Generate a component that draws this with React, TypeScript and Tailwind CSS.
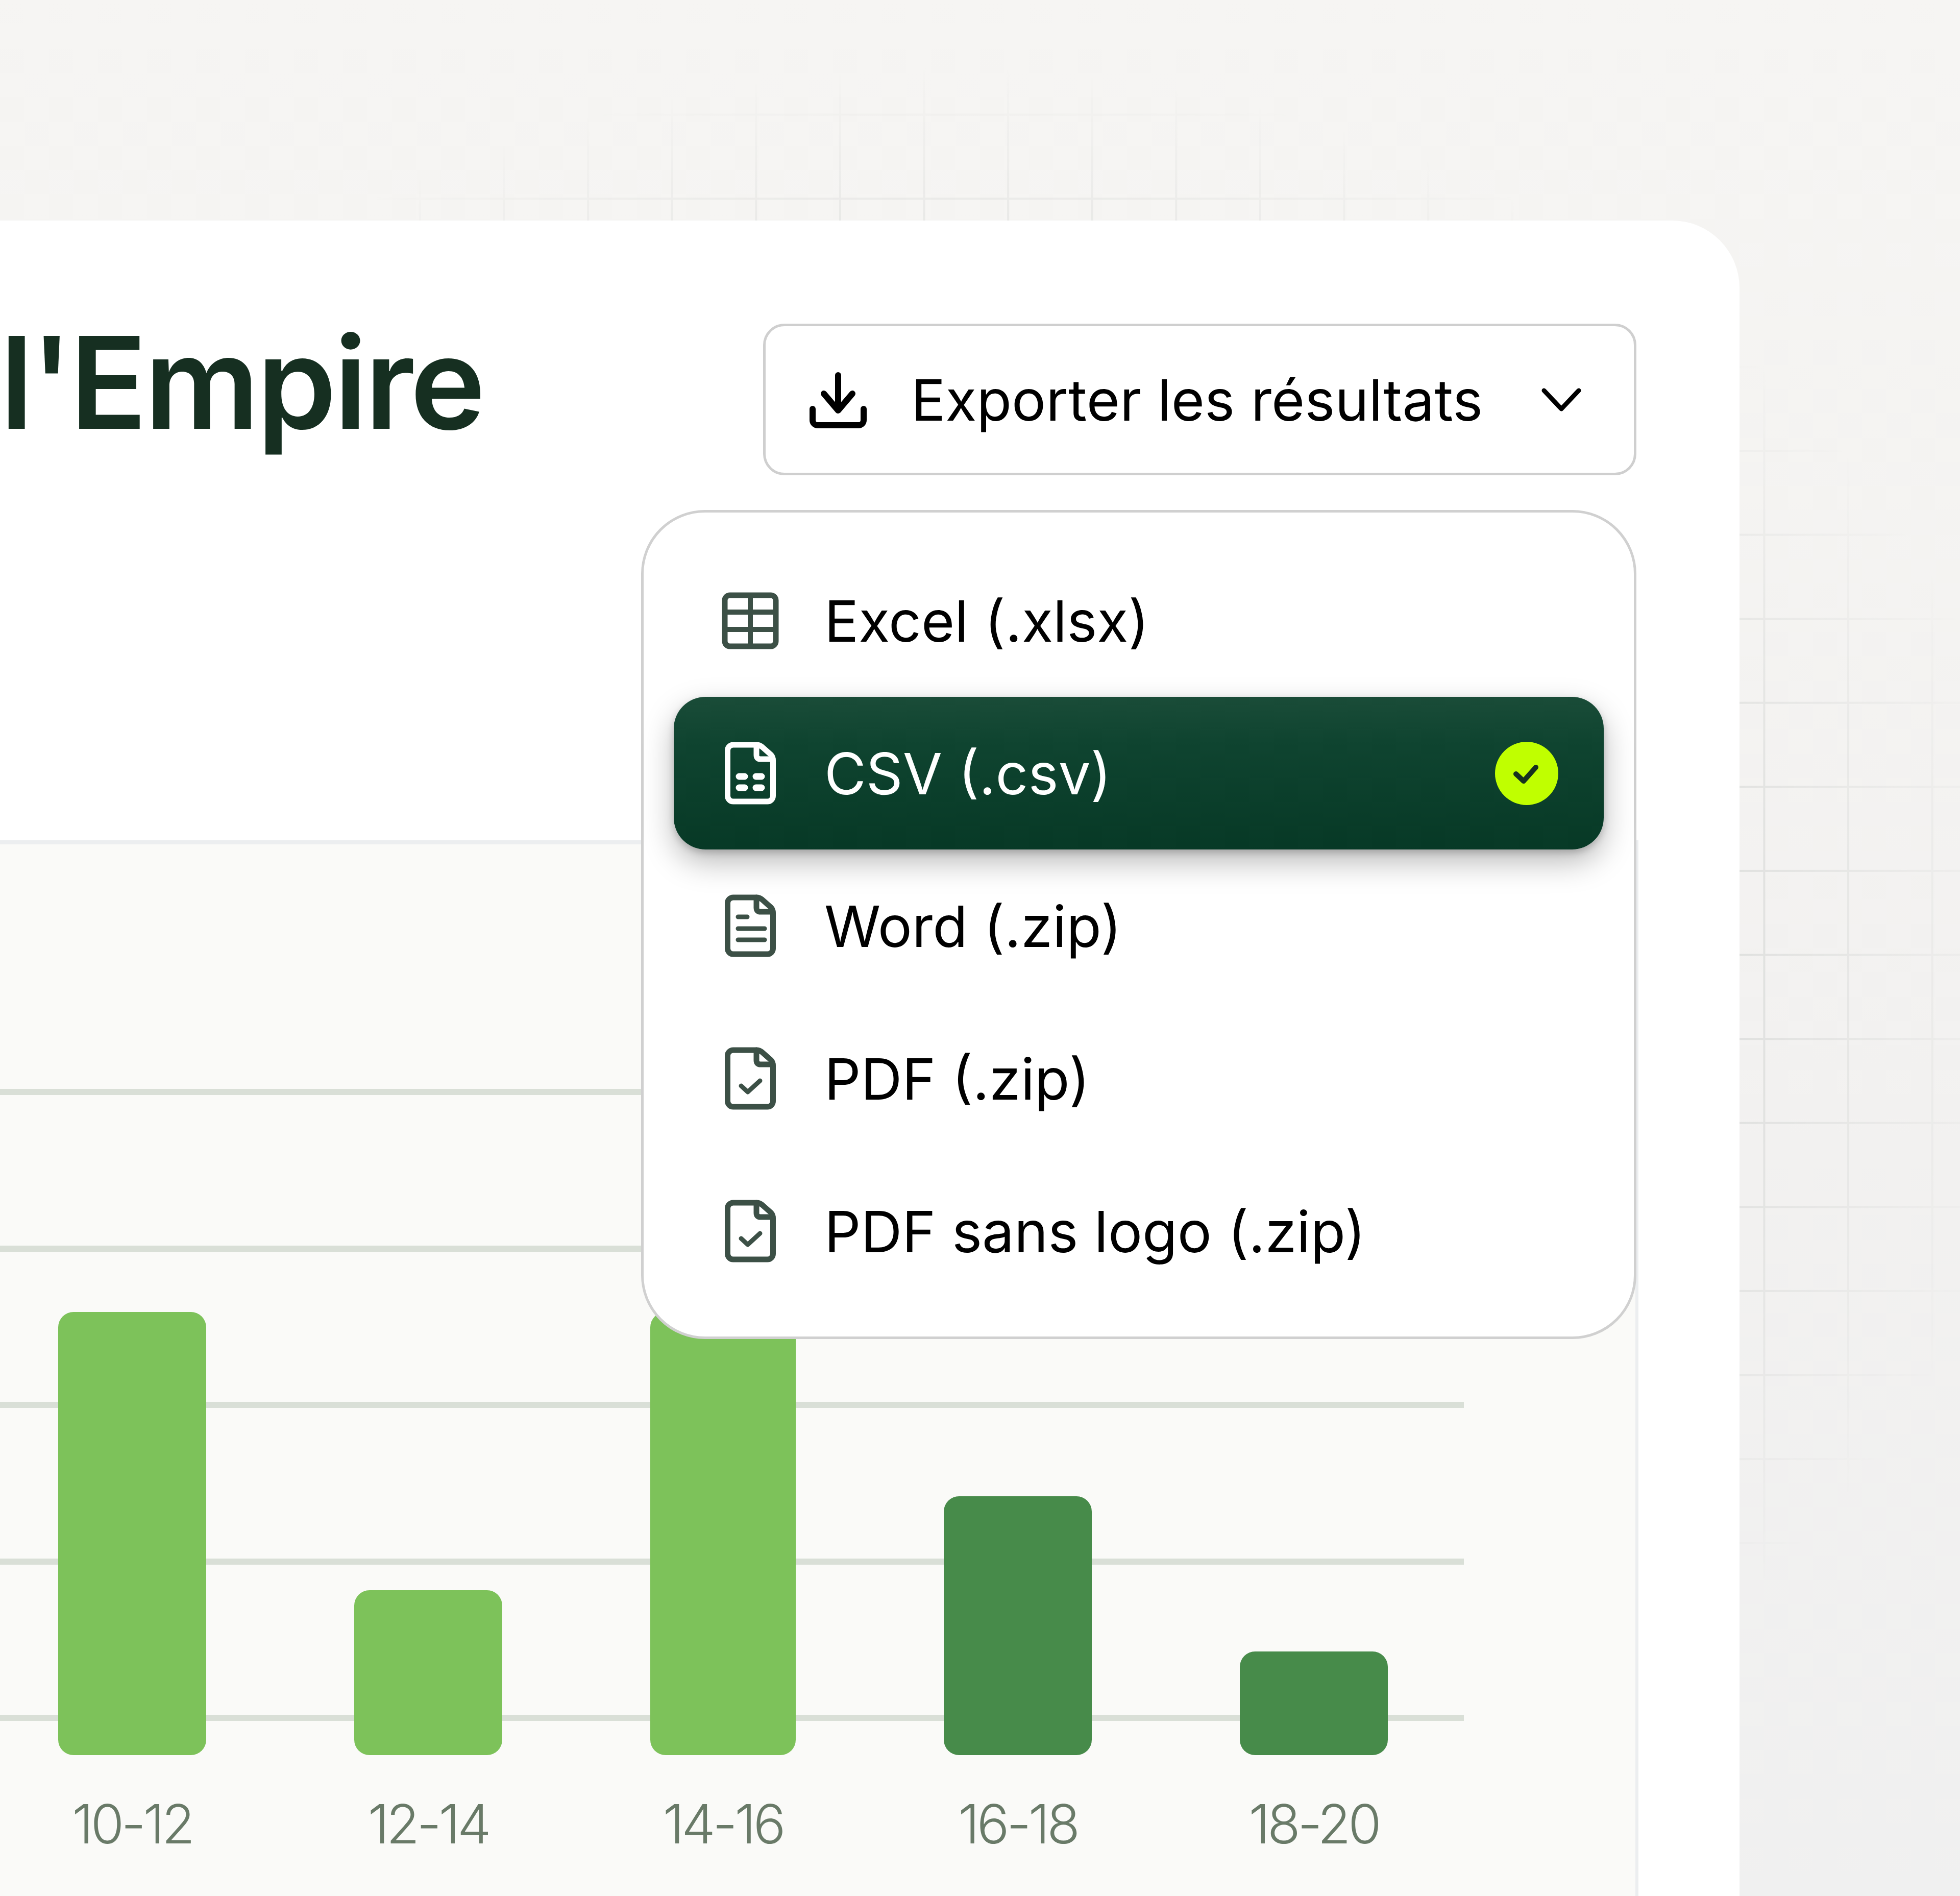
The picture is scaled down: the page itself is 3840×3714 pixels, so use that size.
const formats = [
  { label: 'Excel (.xlsx)', icon: 'table' },
  { label: 'CSV (.csv)', icon: 'csv', selected: true },
  { label: 'Word (.zip)', icon: 'lines' },
  { label: 'PDF (.zip)', icon: 'check' },
  { label: 'PDF sans logo (.zip)', icon: 'check' },
];

const bars = [
  { label: '10-12', height: 'h-[868px]', color: 'bg-[#7dc25a]', width: 'w-[290px]' },
  { label: '12-14', height: 'h-[323px]', color: 'bg-[#7dc25a]', width: 'w-[290px]' },
  { label: '14-16', height: 'h-[868px]', color: 'bg-[#7dc25a]', width: 'w-[285px]' },
  { label: '16-18', height: 'h-[507px]', color: 'bg-[#478b4a]', width: 'w-[290px]' },
  { label: '18-20', height: 'h-[203px]', color: 'bg-[#478b4a]', width: 'w-[290px]' },
];

function TableIcon() {
  return (
    <svg viewBox="0 0 112 112" className="w-[112px] h-[112px] text-[#3c5046]" fill="none" stroke="currentColor" strokeWidth="11">
      <rect x="6" y="6" width="100" height="100" rx="10" />
      <path d="M56 6v100M6 39h100M6 73h100" strokeWidth="10" />
    </svg>
  );
}

function DocIcon({ kind }: { kind: string }) {
  const selected = kind === 'csv';
  return (
    <svg
      viewBox="0 0 100 123"
      className={`w-[100px] h-[123px] ${selected ? 'text-white' : 'text-[#3c5046]'}`}
      fill="none"
      stroke="currentColor"
      strokeWidth="11"
      strokeLinecap="round"
      strokeLinejoin="round"
    >
      <path d="M5.5 17a11 11 0 0 1 11-11H62q6 0 11 4l17 15q4.500 5 4.500 11v70a11 11 0 0 1-11 11H16.500a11 11 0 0 1-11-11Z" />
      <path d="M62 6v20q0 8 8 8h24" />
      {kind === 'lines' && <path d="M26 44h18M26 67h52M26 89h52" strokeWidth="9" />}
      {kind === 'check' && <path d="M32 76l13 12 24-22" strokeWidth="9" />}
      {kind === 'csv' && <path d="M28 68h11M61 68h11M28 90h11M61 90h11" strokeWidth="13" />}
    </svg>
  );
}

function FormatRow({ label, icon, selected }: { label: string; icon: string; selected?: boolean }) {
  return (
    <div
      className={`flex items-center h-[299px] pl-[94px] pr-[89px] rounded-[62px] ${
        selected
          ? 'bg-[linear-gradient(180deg,#1a4c38_0%,#0f4430_30%,#073926_100%)] shadow-[0_24px_60px_rgba(0,0,0,0.28),0_6px_14px_rgba(0,0,0,0.18)] text-white relative'
          : 'text-black'
      }`}
    >
      <div className="w-[112px] flex justify-center shrink-0">
        {icon === 'table' ? <TableIcon /> : <DocIcon kind={icon} />}
      </div>
      <span className="ml-[89px] text-[112px] leading-none">{label}</span>
      {selected && (
        <div className="ml-auto w-[124px] h-[124px] rounded-full bg-[#c0ff00] flex items-center justify-center">
          <svg viewBox="0 0 124 124" className="w-[124px] h-[124px]" fill="none" stroke="#16301f" strokeWidth="10" strokeLinecap="round" strokeLinejoin="round">
            <path d="M41 63l15 14 24-27" />
          </svg>
        </div>
      )}
    </div>
  );
}

function Cursor() {
  return (
    <svg viewBox="2560 1540 300 320" className="absolute left-[2560px] top-[1540px] w-[300px] h-[320px]" fill="none">
      <path d="M2627 1606L2804 1734L2714 1751L2650 1822Z" stroke="#fff" strokeWidth="58" strokeLinejoin="round" fill="#fff" />
      <path d="M2627 1606L2804 1734L2714 1751L2650 1822Z" stroke="#000" strokeWidth="10" strokeLinejoin="round" fill="#000" />
    </svg>
  );
}

export default function App() {
  return (
    <div className="relative w-[3840px] h-[3714px] overflow-hidden bg-[linear-gradient(180deg,#f6f5f3_0%,#f2f1f0_60%,#f0f0f0_100%)] pt-[432px] font-['Inter',sans-serif]">
      {/* background grid, fades out towards the edges */}
      <div className="absolute inset-0 bg-[linear-gradient(to_right,#d4d6d4_4px,transparent_4px),linear-gradient(to_bottom,#d4d6d4_4px,transparent_4px)] bg-[size:164.6px_164.6px] bg-[position:-2px_58px] [mask-image:radial-gradient(ellipse_2165px_1780px_at_1850px_1910px,black_55%,transparent_100%)]" />

      <div className="relative w-[3408px] h-[3282px] bg-white rounded-tr-[132px] flex flex-col">
        <div className="h-[1214px] shrink-0 flex justify-between items-start pt-[202px] pr-[202px]">
          <h1 className="text-[250px] leading-none font-semibold tracking-[-0.02em] text-[#162f21] mt-[-10px]">l'Empire</h1>

          <div className="relative z-10">
            <div className="flex items-center w-[1711px] h-[297px] bg-white border-[5px] border-[#cfcfcf] rounded-[42px] pl-[86px]">
              <svg viewBox="0 0 112 112" className="w-[112px] h-[112px] shrink-0" fill="none" stroke="#000" strokeWidth="12" strokeLinecap="round" strokeLinejoin="round">
                <path d="M56 8v68M28 44l28 33 28-33" />
                <path d="M6 74v22a10 10 0 0 0 10 10h80a10 10 0 0 0 10-10V74" />
              </svg>
              <span className="ml-[87px] text-[112px] leading-none text-black">Exporter les résultats</span>
              <svg viewBox="0 0 78 46" className="w-[78px] h-[46px] ml-auto mr-[103px]" fill="none" stroke="#000" strokeWidth="9" strokeLinecap="round" strokeLinejoin="round">
                <path d="M5 5l34 36 34-36" />
              </svg>
            </div>

            <div className="absolute right-0 top-full mt-[68px] w-[1950px] h-[1624px] bg-white border-[5px] border-[#d0d0d0] rounded-[125px] pt-[62px] px-[59px]">
              {formats.map((f) => (
                <FormatRow key={f.label} label={f.label} icon={f.icon} selected={f.selected} />
              ))}
            </div>
          </div>
        </div>

        <div className="relative flex-1 w-[3210px] bg-[#fafaf8] border-t-[8px] border-r-[6px] border-[#eceef0] pt-[916px] pl-[114px]">
          <div className="absolute left-0 top-[479px] w-[2868px] flex flex-col gap-[294.5px]">
            <div className="h-[12px] bg-[#d9dfd7]" />
            <div className="h-[12px] bg-[#d9dfd7]" />
            <div className="h-[12px] bg-[#d9dfd7]" />
            <div className="h-[12px] bg-[#d9dfd7]" />
            <div className="h-[12px] bg-[#d9dfd7]" />
          </div>

          <div className="relative flex items-end gap-[290px]">
            {bars.map((b) => (
              <div key={b.label} className="flex flex-col items-center">
                <div className={`${b.width} ${b.height} ${b.color} rounded-[30px]`} />
                <span className="mt-[77px] text-[106px] leading-[116px] font-light tracking-[-0.05em] text-[#697a68]">{b.label}</span>
              </div>
            ))}
          </div>
        </div>
      </div>

      <Cursor />
    </div>
  );
}
